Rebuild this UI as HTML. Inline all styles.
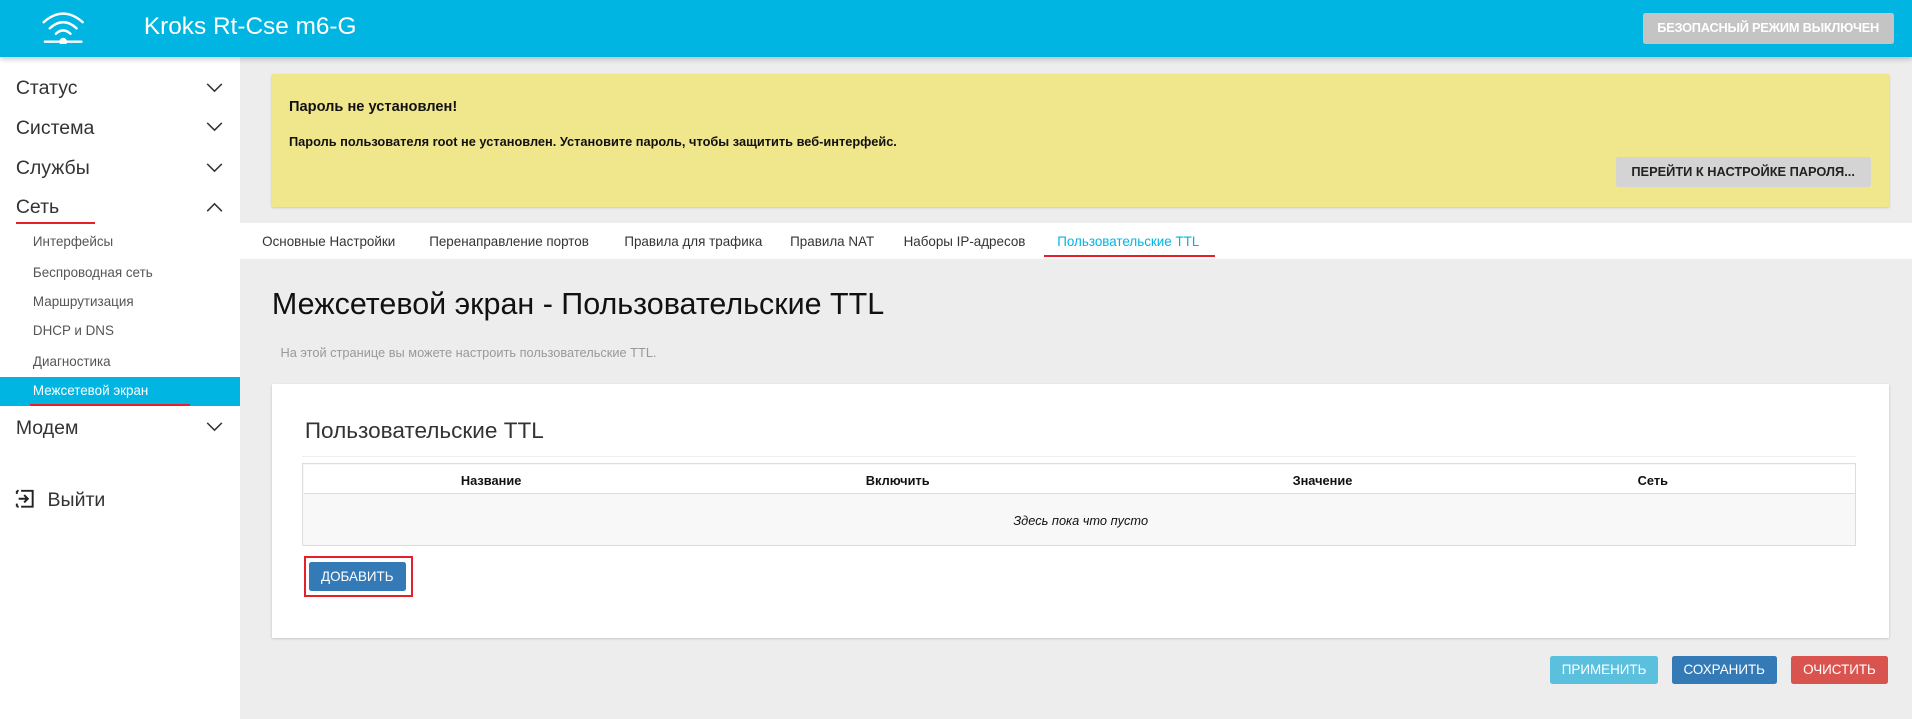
<!DOCTYPE html>
<html><head><meta charset="utf-8"><style>
*{box-sizing:border-box;margin:0;padding:0}
html,body{width:1912px;height:719px;overflow:hidden;background:#ededed}
#w{zoom:1.2194;width:1568px;height:590px;position:relative;font-family:"Liberation Sans","DejaVu Sans",sans-serif;color:#222}
.a{position:absolute;white-space:nowrap}
.hd{left:0;top:0;width:1568px;height:47px;background:#00b5e2;box-shadow:0 2px 4px rgba(0,0,0,.2);z-index:2}
.sb{left:0;top:47px;width:197px;height:543px;background:#fff}
.m{left:13px;font-size:16px;color:#333}
.s{left:27px;font-size:11px;color:#555}
.t{top:192px;font-size:11px;color:#333}
.chev{left:169px;width:14px;height:14px}
.btn{color:#fff;font-size:11px;text-align:center;line-height:23px;border-radius:2px;height:23px}
</style></head><body><div id="w">
<div class="a hd">
<svg class="a" style="left:33px;top:8px" width="38" height="28" viewBox="0 0 38 28" fill="none" stroke="#fff" stroke-width="2" stroke-linecap="round"><path d="M3 10 Q19 -4 35 10"/><path d="M8 15 Q19 5 30 15"/><path d="M13 19.5 Q19 14 25 19.5"/><path d="M4 26 H34"/><circle cx="19" cy="26" r="2.2" fill="#fff"/></svg>
<div class="a" style="left:118px;top:11px;font-size:20px;color:#fff">Kroks Rt-Cse m6-G</div>
<div class="a" style="left:1347px;top:11px;width:206px;height:25px;background:#c4c4c4;border-radius:2px;color:#fff;font-weight:bold;font-size:10.5px;text-align:center;line-height:25px;letter-spacing:-.2px">БЕЗОПАСНЫЙ РЕЖИМ ВЫКЛЮЧЕН</div>
</div>
<div class="a sb"></div>
<div class="a m" style="top:63px">Статус</div>
<div class="a m" style="top:96px">Система</div>
<div class="a m" style="top:129px">Службы</div>
<div class="a m" style="top:161px">Сеть</div>
<div class="a" style="left:13px;top:182px;width:65px;height:2px;background:#e4202a"></div>
<svg class="a chev" style="top:65px" viewBox="0 0 14 14"><path d="M1 4 L7 10 L13 4" fill="none" stroke="#333" stroke-width="1.3"/></svg>
<svg class="a chev" style="top:97px" viewBox="0 0 14 14"><path d="M1 4 L7 10 L13 4" fill="none" stroke="#333" stroke-width="1.3"/></svg>
<svg class="a chev" style="top:130px" viewBox="0 0 14 14"><path d="M1 4 L7 10 L13 4" fill="none" stroke="#333" stroke-width="1.3"/></svg>
<svg class="a chev" style="top:163px" viewBox="0 0 14 14"><path d="M1 10 L7 4 L13 10" fill="none" stroke="#333" stroke-width="1.3"/></svg>
<svg class="a chev" style="top:343px" viewBox="0 0 14 14"><path d="M1 4 L7 10 L13 4" fill="none" stroke="#333" stroke-width="1.3"/></svg>
<div class="a s" style="top:192px">Интерфейсы</div>
<div class="a s" style="top:217px">Беспроводная сеть</div>
<div class="a s" style="top:241px">Маршрутизация</div>
<div class="a s" style="top:265px">DHCP и DNS</div>
<div class="a s" style="top:290px">Диагностика</div>
<div class="a" style="left:0;top:309px;width:197px;height:24px;background:#00b5e2"></div>
<div class="a s" style="top:314px;color:#fff">Межсетевой экран</div>
<div class="a" style="left:25px;top:331px;width:131px;height:2px;background:#e4202a"></div>
<div class="a m" style="top:342px">Модем</div>
<svg class="a" style="left:12px;top:401px" width="16" height="16" viewBox="0 0 16 16" fill="none" stroke="#222" stroke-width="1.6"><path d="M5 1.5 H14.5 V14.5 H5 M1.5 1.5 V4 M1.5 12 V14.5 M1.5 1.5 H3 M1.5 14.5 H3"/><path d="M3 8 H10.5 M7.5 5 L10.5 8 L7.5 11"/></svg>
<div class="a m" style="left:39px;top:401px">Выйти</div>

<div class="a" style="left:223px;top:61px;width:1326px;height:109px;background:#f0e68c;box-shadow:0 1px 2px rgba(0,0,0,.2)"></div>
<div class="a" style="left:237px;top:81px;font-size:12px;font-weight:bold;color:#111">Пароль не установлен!</div>
<div class="a" style="left:237px;top:110px;font-size:10.5px;font-weight:bold;color:#111">Пароль пользователя root не установлен. Установите пароль, чтобы защитить веб-интерфейс.</div>
<div class="a" style="left:1325px;top:129px;width:209px;height:24px;background:#d4d4d4;border-radius:2px;font-size:10.5px;font-weight:bold;color:#222;text-align:center;line-height:24px">ПЕРЕЙТИ К НАСТРОЙКЕ ПАРОЛЯ...</div>

<div class="a" style="left:197px;top:183px;width:1371px;height:29px;background:#fff"></div>
<div class="a t" style="left:215px">Основные Настройки</div>
<div class="a t" style="left:352px">Перенаправление портов</div>
<div class="a t" style="left:512px">Правила для трафика</div>
<div class="a t" style="left:648px">Правила NAT</div>
<div class="a t" style="left:741px">Наборы IP-адресов</div>
<div class="a t" style="left:867px;color:#00b5e2">Пользовательские TTL</div>
<div class="a" style="left:856px;top:209px;width:140px;height:2px;background:#e4202a"></div>

<div class="a" style="left:223px;top:235px;font-size:25px;color:#111">Межсетевой экран - Пользовательские TTL</div>
<div class="a" style="left:230px;top:283px;font-size:10.5px;color:#999">На этой странице вы можете настроить пользовательские TTL.</div>

<div class="a" style="left:223px;top:315px;width:1326px;height:208px;background:#fff;box-shadow:0 1px 2px rgba(0,0,0,.2)"></div>
<div class="a" style="left:250px;top:343px;font-size:18.5px;color:#333">Пользовательские TTL</div>
<div class="a" style="left:248px;top:374px;width:1274px;height:1px;background:#eee"></div>
<div class="a" style="left:248px;top:380px;width:1274px;height:68px;border:1px solid #ddd;background:#f8f8f8"></div>
<div class="a" style="left:249px;top:381px;width:1272px;height:24px;background:#fff;border-bottom:1px solid #ddd"></div>
<div class="a" style="left:378px;top:388px;font-size:10.5px;font-weight:bold;color:#111">Название</div>
<div class="a" style="left:710px;top:388px;font-size:10.5px;font-weight:bold;color:#111">Включить</div>
<div class="a" style="left:1060px;top:388px;font-size:10.5px;font-weight:bold;color:#111">Значение</div>
<div class="a" style="left:1343px;top:388px;font-size:10.5px;font-weight:bold;color:#111">Сеть</div>
<div class="a" style="left:831px;top:421px;font-size:10.5px;font-style:italic;color:#111">Здесь пока что пусто</div>
<div class="a" style="left:249px;top:456px;width:90px;height:34px;border:2px solid #e4202a"></div>
<div class="a btn" style="left:253px;top:461px;width:80px;height:24px;line-height:24px;background:#337ab7">ДОБАВИТЬ</div>

<div class="a btn" style="left:1271px;top:538px;width:89px;background:#5bc0de">ПРИМЕНИТЬ</div>
<div class="a btn" style="left:1371px;top:538px;width:86px;background:#337ab7">СОХРАНИТЬ</div>
<div class="a btn" style="left:1469px;top:538px;width:79px;background:#d9534f">ОЧИСТИТЬ</div>
</div></body></html>
